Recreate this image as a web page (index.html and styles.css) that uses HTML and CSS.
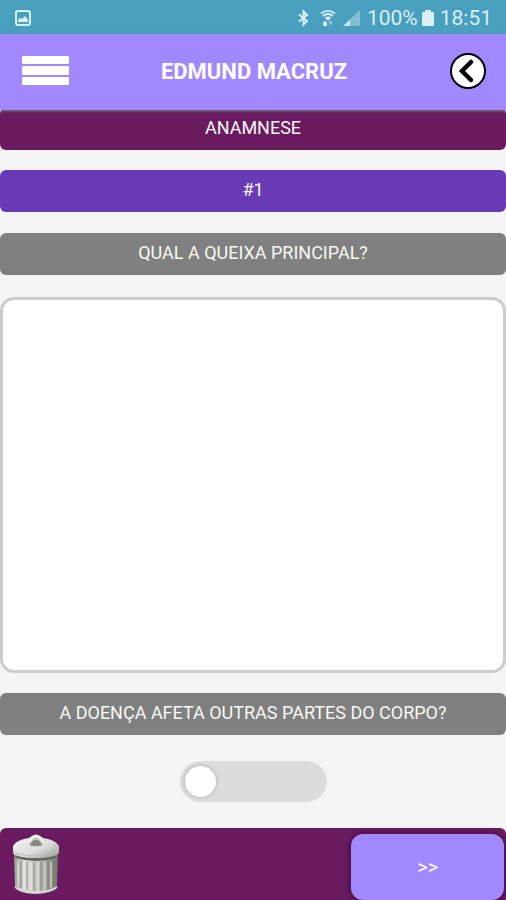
FILE: index.html
```html
<!DOCTYPE html>
<html lang="pt-BR">
<head>
<meta charset="utf-8">
<meta name="viewport" content="width=device-width, initial-scale=1">
<title>Edmund Macruz</title>
<link rel="stylesheet" href="styles.css">
</head>
<body>
<div class="status">
  <svg class="status-picture" width="18" height="18" viewBox="0 0 18 18" aria-hidden="true">
    <rect x="2" y="2" width="14" height="14" rx="2" fill="none" stroke="currentColor" stroke-width="2"/>
    <path d="M4 13V11L6 9L8 10L11 7L14 11V13Z" fill="currentColor"/>
  </svg>
  <div class="status-info">
    <svg width="14" height="18" viewBox="0 0 14 18" aria-hidden="true">
      <path d="M3 5.500L11 12L7.500 15.500V2.500L11 6L3 12.500" fill="none" stroke="currentColor" stroke-width="2"/>
    </svg>
    <svg class="status-wifi" width="16" height="18" viewBox="0 0 16 18" aria-hidden="true">
      <path d="M1 4.500Q8 -1 15 4.500M3 7Q8 3 13 7M5.500 9.200Q8 7.500 10.500 9.200" fill="none" stroke="currentColor" stroke-width="1.700"/>
      <path d="M8 12L5.500 9H10.500ZM3 14L5 11.500L7 14V17H3Z" fill="currentColor"/>
      <path d="M9 12H12V14L10.500 17L9 14Z" fill="currentColor" opacity=".5"/>
    </svg>
    <svg class="status-signal" width="19" height="18" viewBox="0 0 19 18" aria-hidden="true">
      <path d="M1 17L18 1V17Z" fill="currentColor" opacity=".4"/>
      <path d="M1 17L8 10.500V17Z" fill="currentColor" opacity=".8"/>
    </svg>
    <span>100%</span>
    <svg class="status-battery" width="12" height="18" viewBox="0 0 12 18" aria-hidden="true">
      <path d="M3 1H9V3H11Q12 3 12 4V16Q12 17 11 17H1Q0 17 0 16V4Q0 3 1 3H3Z" fill="currentColor"/>
    </svg>
    <span>18:51</span>
  </div>
</div>
<header class="header">
  <button class="icon-button" type="button" aria-label="Menu">
    <svg width="47" height="30" viewBox="0 0 47 30" fill="#fff" aria-hidden="true">
      <rect width="47" height="8" rx="1"/><rect y="10" width="47" height="9" rx="1"/><rect y="21" width="47" height="8" rx="1"/>
    </svg>
  </button>
  <h1 class="title">EDMUND MACRUZ</h1>
  <button class="icon-button" type="button" aria-label="Voltar">
    <svg width="36" height="36" viewBox="0 0 36 36" aria-hidden="true">
      <circle cx="18" cy="18" r="17" fill="#fff" stroke="#000" stroke-width="2"/>
      <path d="M21 9L12 18L21 27" fill="none" stroke="#000" stroke-width="4.500" stroke-linecap="round" stroke-linejoin="miter"/>
    </svg>
  </button>
</header>
<main class="form">
  <h2 class="bar bar-section">ANAMNESE</h2>
  <h3 class="bar bar-number">#1</h3>
  <label class="bar" for="queixa">QUAL A QUEIXA PRINCIPAL?</label>
  <textarea class="answer" id="queixa"></textarea>
  <label class="bar" for="afeta">A DOENÇA AFETA OUTRAS PARTES DO CORPO?</label>
  <input class="toggle" id="afeta" type="checkbox" role="switch">
</main>
<footer class="footer">
  <button class="icon-button" type="button" aria-label="Excluir">
    <svg width="48" height="62" viewBox="0 0 48 62" aria-hidden="true">
      <defs>
        <linearGradient id="can">
          <stop offset="0" stop-color="#999b93"/><stop offset=".25" stop-color="#deded9"/><stop offset=".6" stop-color="#babbb4"/><stop offset="1" stop-color="#70736a"/>
        </linearGradient>
        <linearGradient id="lid" x1="0" y1="0" x2="1" y2="1">
          <stop offset="0" stop-color="#f5f5f3"/><stop offset=".6" stop-color="#dddeda"/><stop offset="1" stop-color="#91948c"/>
        </linearGradient>
      </defs>
      <path d="M2 20H46L45 53Q43 59 24 60Q5 59 3 53Z" fill="url(#can)"/>
      <path d="M9 27V54M15 28V56M22 28V57M29 28V57M36 28V56M42 27V53" stroke="#7b7e75" stroke-width="2" opacity=".45"/>
      <path d="M6 27V52M12 28V55M19 28V56M26 28V57M33 28V56M39 28V54" stroke="#ededeb" stroke-width="2" opacity=".5"/>
      <path d="M3 53Q9 58 24 58Q39 58 45 53" fill="none" stroke="#d9dad5" stroke-width="2"/>
      <path d="M3 22Q24 29 45 22" fill="none" stroke="#62655c" stroke-width="3"/>
      <path d="M1 12Q4 6 17 4Q20 1 24 1Q28 1 31 4Q44 6 47 12V19Q43 24 24 24Q5 24 1 19Z" fill="url(#lid)"/>
      <path d="M1 17Q7 22 24 22Q41 22 47 17" fill="none" stroke="#b9bbb4" stroke-width="1"/>
      <path d="M16 11L20 5Q24 2 28 5L32 11Q24 14 16 11Z" fill="#c2c4bd"/>
      <path d="M18 11Q20 6 24 6Q28 6 30 11Q24 13 18 11Z" fill="#85877f"/>
      <path d="M16 10L21 3Q24 0 27 3L32 10" fill="none" stroke="#f0f0ee" stroke-width="2"/>
    </svg>
  </button>
  <button class="next" type="button">&gt;&gt;</button>
</footer>
</body>
</html>
```

FILE: styles.css
```css
* {
  box-sizing: border-box;
}

body {
  margin: 0;
  min-height: 100vh;
  display: flex;
  flex-direction: column;
  background: #f5f5f5;
  color: #fff;
  font-family: Roboto, "Liberation Sans", sans-serif;
  font-size: 18px;
}

.status {
  height: 34px;
  padding: 2px 14px 0;
  display: flex;
  align-items: center;
  justify-content: space-between;
  background: #489fbe;
  color: #d9f0f8;
  font-size: 21px;
}

.status-info {
  display: flex;
  align-items: center;
  gap: 6px;
}

.status-wifi {
  margin-left: 4px;
}

.status-battery {
  margin-left: -2px;
}

.header {
  position: relative;
  height: 76px;
  padding: 0 20px 2px 22px;
  display: grid;
  grid-template-columns: 1fr auto 1fr;
  align-items: center;
  background: #a288ff;
  box-shadow: 0 1px 3px 0 #777;
}

.header .icon-button:last-child {
  justify-self: end;
}

.icon-button {
  display: flex;
  justify-self: start;
  padding: 0;
  border: 0;
  background: none;
}

.title {
  margin: 0;
  font-size: 22px;
  font-weight: 700;
}

.form {
  flex: 1;
  margin-top: -2px;
  display: flex;
  flex-direction: column;
}

.bar {
  height: 42px;
  margin: 0;
  padding-bottom: 4px;
  display: flex;
  align-items: center;
  justify-content: center;
  border-radius: 6px;
  background: #808080;
  color: #f8f8f4;
  font-size: 18px;
  font-weight: 400;
}

.bar-section {
  background: #6a1b60;
}

.bar-number {
  margin: 20px 0 21px;
  background: #693ab6;
}

.answer {
  flex: 1;
  margin: 22px 0 20px;
  padding: 12px;
  border: 3px solid #ccc;
  border-radius: 14px;
  background: #fff;
  font: inherit;
  resize: none;
}

.toggle {
  appearance: none;
  align-self: center;
  width: 147px;
  height: 41px;
  margin: 26px 0;
  padding: 5px;
  border-radius: 21px;
  background: #dcdcdc;
}

.toggle::before {
  content: "";
  display: block;
  width: 31px;
  height: 31px;
  border-radius: 50%;
  background: #fff;
  box-shadow: 0 0 3px 1px #bbb;
}

.toggle:checked::before {
  margin-left: auto;
}

.footer {
  height: 72px;
  padding: 6px 2px 0 12px;
  display: flex;
  justify-content: space-between;
  align-items: stretch;
  border-radius: 6px 6px 0 0;
  background: #6a1b60;
}

.next {
  width: 31%;
  border: 0;
  border-radius: 12px;
  background: #a288ff;
  box-shadow: 0 1px 6px 1px #400c38;
  color: #fff;
  font: inherit;
  font-size: 20px;
}
```
